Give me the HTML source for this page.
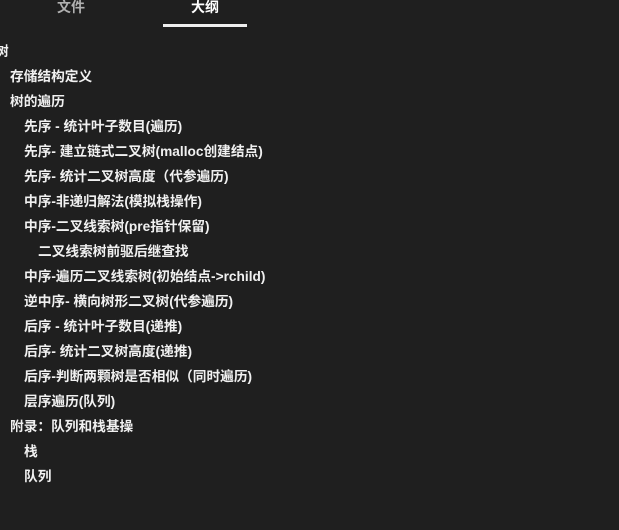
<!DOCTYPE html>
<html><head><meta charset="utf-8"><style>
body{margin:0;width:619px;height:530px;background:#1f1f1f;overflow:hidden;font-family:"Liberation Sans","Noto Sans CJK SC",sans-serif;font-weight:bold;font-size:13.7px;color:#f0f0f0;position:relative}
.t{position:absolute;top:-1px;font-size:14px;line-height:16px}
.u{position:absolute;left:163px;top:24px;width:84px;height:3px;background:#eee}
.r{position:absolute;white-space:nowrap;line-height:18px}
</style></head><body>
<div class="t" style="left:57px;color:#b0b0b0">文件</div>
<div class="t" style="left:191px;color:#fff">大纲</div>
<div class="u"></div>
<div class="r" style="left:-5px;top:43px">树</div>
<div class="r" style="left:10px;top:68px">存储结构定义</div>
<div class="r" style="left:10px;top:93px">树的遍历</div>
<div class="r" style="left:24px;top:118px">先序 - 统计叶子数目(遍历)</div>
<div class="r" style="left:24px;top:143px">先序- 建立链式二叉树(malloc创建结点)</div>
<div class="r" style="left:24px;top:168px">先序- 统计二叉树高度（代参遍历)</div>
<div class="r" style="left:24px;top:193px">中序-非递归解法(模拟栈操作)</div>
<div class="r" style="left:24px;top:218px">中序-二叉线索树(pre指针保留)</div>
<div class="r" style="left:38px;top:243px">二叉线索树前驱后继查找</div>
<div class="r" style="left:24px;top:268px">中序-遍历二叉线索树(初始结点-&gt;rchild)</div>
<div class="r" style="left:24px;top:293px">逆中序- 横向树形二叉树(代参遍历)</div>
<div class="r" style="left:24px;top:318px">后序 - 统计叶子数目(递推)</div>
<div class="r" style="left:24px;top:343px">后序- 统计二叉树高度(递推)</div>
<div class="r" style="left:24px;top:368px">后序-判断两颗树是否相似（同时遍历)</div>
<div class="r" style="left:24px;top:393px">层序遍历(队列)</div>
<div class="r" style="left:10px;top:418px">附录：队列和栈基操</div>
<div class="r" style="left:24px;top:443px">栈</div>
<div class="r" style="left:24px;top:468px">队列</div>
</body></html>
